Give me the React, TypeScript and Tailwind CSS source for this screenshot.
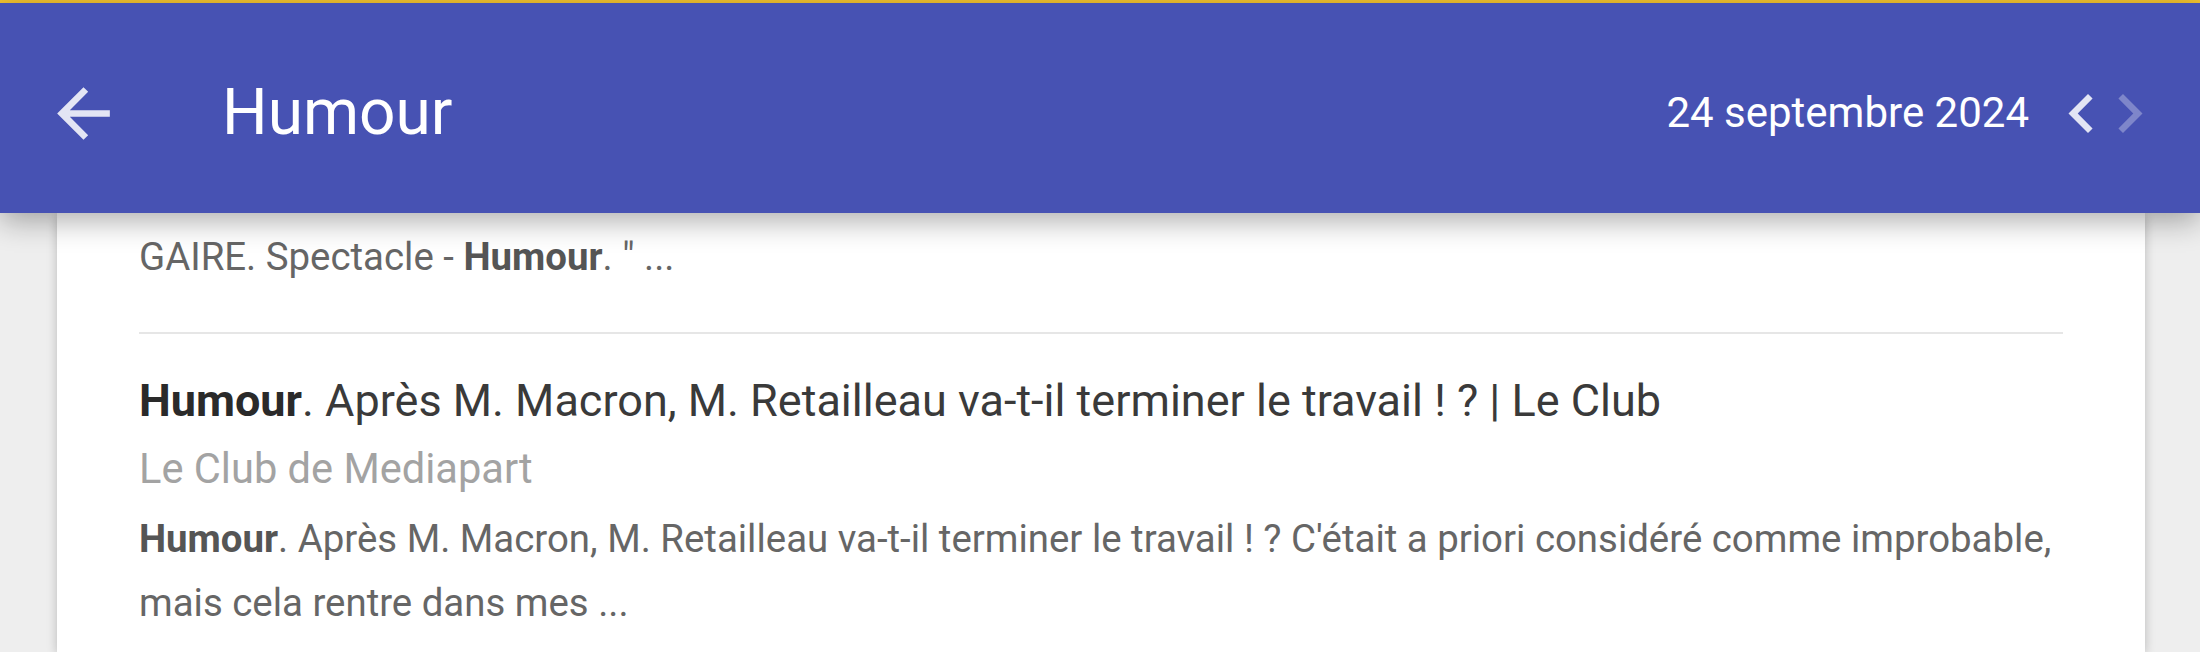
import React from 'react';

const font = { fontFamily: 'Roboto, "Noto Sans", sans-serif' };

function BackArrow() {
  return (
    <svg viewBox="0 0 24 24" className="w-[79px] h-[79px] flex-shrink-0" fill="currentColor">
      <path d="M20 11H7.83l5.59-5.59L12 4l-8 8 8 8 1.41-1.41L7.83 13H20v-2z" />
    </svg>
  );
}

function ChevronLeft() {
  return (
    <svg viewBox="6 6 12 12" className="w-[39px] h-[39px]" fill="currentColor">
      <path d="M15.41 7.41L14 6l-6 6 6 6 1.41-1.41L10.83 12z" />
    </svg>
  );
}

function ChevronRight() {
  return (
    <svg viewBox="6 6 12 12" className="w-[39px] h-[39px]" fill="currentColor">
      <path d="M10 6L8.59 7.41 13.17 12l-4.58 4.59L10 18l6-6z" />
    </svg>
  );
}

export default function App() {
  return (
    <div className="h-[652px] w-[2200px] overflow-hidden bg-[#eeeeee] flex flex-col" style={font}>
      {/* Top accent */}
      <div className="h-[3px] bg-[#f2c230] flex-shrink-0" />

      {/* Toolbar */}
      <header className="relative z-10 h-[210px] flex-shrink-0 bg-[#4752b3] flex items-center pl-[44px] pr-[51px] pt-[10px] text-white shadow-[0_8px_28px_rgba(0,0,0,0.32)]">
        <div className="text-white/85">
          <BackArrow />
        </div>
        <h1 className="ml-[99px] text-[64px] leading-none font-normal">Humour</h1>
        <div className="ml-auto flex items-center">
          <span className="text-[42px] leading-none font-normal">24 septembre 2024</span>
          <div className="ml-[33px] flex items-center gap-[9px]">
            <span className="text-white/85"><ChevronLeft /></span>
            <span className="text-white/30"><ChevronRight /></span>
          </div>
        </div>
      </header>

      {/* Results list */}
      <main className="flex-1 pl-[57px] pr-[55px]">
        <div className="bg-white h-full shadow-[0_2px_10px_rgba(0,0,0,0.22)] px-[82px] pt-[12px]">
          <p className="text-[38.4px] leading-[64px] text-[#666666]">
            GAIRE. Spectacle - <b className="font-bold text-[#555555]">Humour</b>. " ...
          </p>

          <div className="mt-[43px] h-[2px] bg-[#e6e6e6]" />

          <article className="pt-[37px]">
            <h2 className="text-[45px] leading-[60px] text-[#3a3a3a]">
              <b className="font-bold text-[#2a2a2a]">Humour</b>. Après M. Macron, M. Retailleau va-t-il terminer le travail ! ? | Le Club
            </h2>
            <div className="mt-[8px] text-[41.6px] leading-[60px] text-[#a3a3a3]">Le Club de Mediapart</div>
            <p className="mt-[8px] text-[38.4px] leading-[64px] text-[#666666]">
              <b className="font-bold text-[#555555]">Humour</b>. Après M. Macron, M. Retailleau va-t-il terminer le travail ! ? C'était a priori considéré comme improbable,
              <br />
              mais cela rentre dans mes ...
            </p>
          </article>
        </div>
      </main>
    </div>
  );
}
